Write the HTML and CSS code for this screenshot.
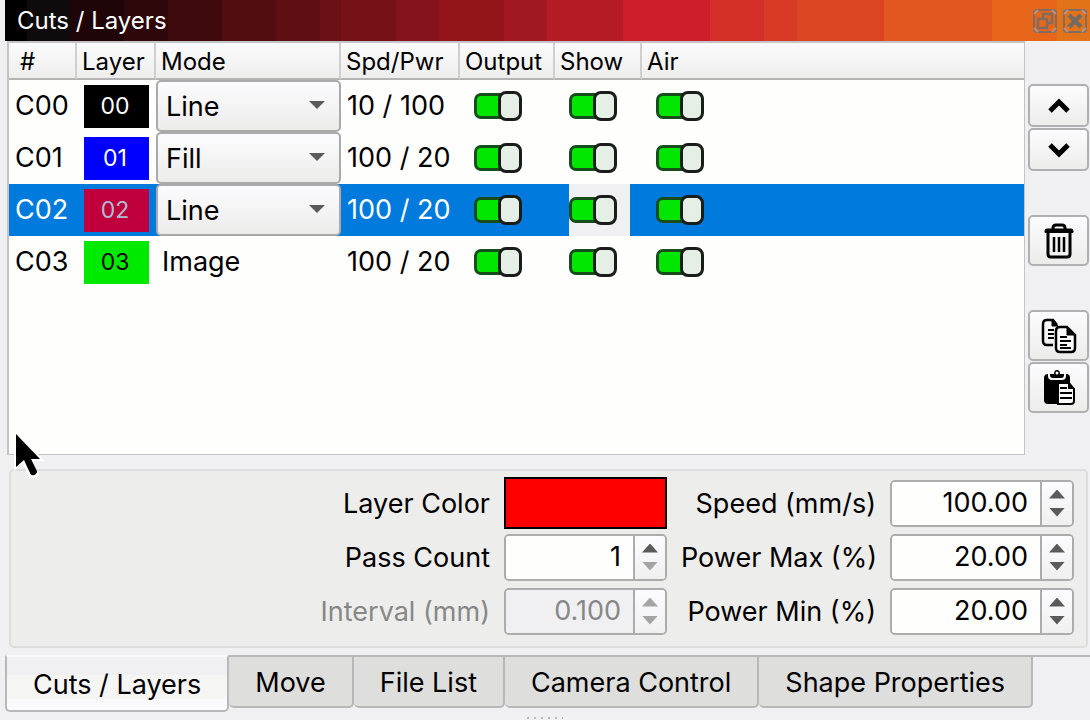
FILE: index.html
```html
<!DOCTYPE html>
<html lang="en">
<head>
<meta charset="utf-8">
<title>Cuts / Layers</title>
<link rel="stylesheet" href="styles.css">
</head>
<body>
<div class="dock">
  <header class="titlebar">
    <h1 class="title">Cuts / Layers</h1>
    <button class="dock-button" type="button" aria-label="Float">
      <svg width="24" height="24" viewBox="0 0 24 24" fill="none"><rect x="1" y="1" width="22" height="22" rx="3" stroke="#806c61" stroke-width="2"/><path d="M1 5L5 1M19 1l4 4M1 19l4 4M19 23l4-4" stroke="#b89286" stroke-width="2"/><path d="M5 10h9v9H5zM10 9V5h9v9h-4" stroke="#806c61" stroke-width="2.5"/></svg>
    </button>
    <button class="dock-button" type="button" aria-label="Close">
      <svg width="24" height="24" viewBox="0 0 24 24" fill="none"><rect x="1" y="1" width="22" height="22" rx="3" stroke="#806c61" stroke-width="2"/><path d="M1 5L5 1M19 1l4 4M1 19l4 4M19 23l4-4" stroke="#b89286" stroke-width="2"/><path d="M6 6l12 12M18 6L6 18" stroke="#746b62" stroke-width="4.5"/></svg>
    </button>
  </header>

  <main class="workspace">
    <div class="list">
      <table class="layers">
        <colgroup><col class="col-id"><col class="col-layer"><col class="col-mode"><col class="col-power"><col class="col-output"><col class="col-show"><col></colgroup>
        <thead>
          <tr><th class="th-id">#</th><th>Layer</th><th>Mode</th><th>Spd/Pwr</th><th>Output</th><th>Show</th><th>Air</th></tr>
        </thead>
        <tbody>
          <tr>
            <td>C00</td><td class="cell-flush"><span class="swatch black">00</span></td>
            <td class="cell-flush"><div class="combo"><select aria-label="Mode of C00"><option>Line</option><option>Fill</option></select></div></td>
            <td>10 / 100</td>
            <td class="cell-toggle"><input class="toggle" type="checkbox" aria-label="Output C00" checked></td>
            <td class="cell-toggle"><input class="toggle" type="checkbox" aria-label="Show C00" checked></td>
            <td class="cell-toggle"><input class="toggle" type="checkbox" aria-label="Air C00" checked></td>
          </tr>
          <tr>
            <td>C01</td><td class="cell-flush"><span class="swatch blue">01</span></td>
            <td class="cell-flush"><div class="combo"><select aria-label="Mode of C01"><option>Fill</option><option>Line</option></select></div></td>
            <td>100 / 20</td>
            <td class="cell-toggle"><input class="toggle" type="checkbox" aria-label="Output C01" checked></td>
            <td class="cell-toggle"><input class="toggle" type="checkbox" aria-label="Show C01" checked></td>
            <td class="cell-toggle"><input class="toggle" type="checkbox" aria-label="Air C01" checked></td>
          </tr>
          <tr class="selected">
            <td>C02</td><td class="cell-flush"><span class="swatch red">02</span></td>
            <td class="cell-flush"><div class="combo"><select aria-label="Mode of C02"><option>Line</option><option>Fill</option></select></div></td>
            <td>100 / 20</td>
            <td class="cell-toggle"><input class="toggle" type="checkbox" aria-label="Output C02" checked></td>
            <td class="cell-toggle"><span class="focus-cell"><input class="toggle" type="checkbox" aria-label="Show C02" checked></span></td>
            <td class="cell-toggle"><input class="toggle" type="checkbox" aria-label="Air C02" checked></td>
          </tr>
          <tr>
            <td>C03</td><td class="cell-flush"><span class="swatch green">03</span></td>
            <td>Image</td>
            <td>100 / 20</td>
            <td class="cell-toggle"><input class="toggle" type="checkbox" aria-label="Output C03" checked></td>
            <td class="cell-toggle"><input class="toggle" type="checkbox" aria-label="Show C03" checked></td>
            <td class="cell-toggle"><input class="toggle" type="checkbox" aria-label="Air C03" checked></td>
          </tr>
        </tbody>
      </table>
      <svg class="pointer" width="40" height="50" viewBox="0 0 40 50"><path d="M5 0v40l9-8 6 15q6 1 10-3l-6-14h12z" fill="#fff"/><path d="M7 3v33l8-7 6 13q1 3 4 2t3-4l-6-12h9z" fill="#000"/></svg>
    </div>

    <div class="tools">
      <div class="tool-group">
        <button class="tool" type="button" aria-label="Move up"><svg width="22" height="16" viewBox="0 0 22 16" fill="none"><path d="M2 13l9-9 9 9" stroke="#000" stroke-width="5"/></svg></button>
        <button class="tool" type="button" aria-label="Move down"><svg width="22" height="16" viewBox="0 0 22 16" fill="none"><path d="M2 3l9 9 9-9" stroke="#000" stroke-width="5"/></svg></button>
      </div>
      <div class="tool-group">
        <button class="tool tall" type="button" aria-label="Delete"><svg width="30" height="36" viewBox="0 0 30 36" fill="none" stroke="#000"><path d="M9 7V5q0-3 3-3h6q3 0 3 3v2" stroke-width="3"/><path d="M1 9.500V8q0-2 2-2h24q2 0 2 2v1.500z" fill="#000" stroke-width="1"/><path d="M4 9v22q0 3 3 3h16q3 0 3-3V9" stroke-width="3"/><path d="M10 14v15M15 14v15M20 14v15" stroke-width="2.500"/></svg></button>
      </div>
      <div class="tool-group">
        <button class="tool tall" type="button" aria-label="Copy"><svg width="36" height="36" viewBox="0 0 36 36" fill="none" stroke="#000" stroke-width="2.500"><path d="M12 27H6q-4 0-4-4V6q0-4 4-4h6l4 5" /><path d="M11 2l6 6h-6z" fill="#000" stroke-width="1"/><path d="M7 12h6M7 16h6M7 20h6" stroke-width="2"/><path d="M19 9h7l8 8v13q0 4-4 4H19q-4 0-4-4V13q0-4 4-4z" fill="#fbfbfb"/><path d="M26 9l8 8h-8z" fill="#000" stroke-width="1"/><path d="M19 19h7M19 23h11M19 27h7M19 30h11" stroke-width="2"/></svg></button>
        <button class="tool tall" type="button" aria-label="Paste"><svg width="34" height="36" viewBox="0 0 34 36" fill="none"><path d="M2 8q0-4 4-4h18q4 0 4 4v26H6q-4 0-4-4z" fill="#000"/><path d="M6 3h18v3q0 4-4 4H10q-4 0-4-4z" fill="#f8f8f8"/><path d="M8 4h4q0-4 3-4t3 4h4v1q0 3-3 3h-8q-3 0-3-3z" fill="#000"/><circle cx="15" cy="3" r="1.500" fill="#fff"/><path d="M16 13h11l5 6v12q0 3-3 3H16z" fill="#fafafa" stroke="#000" stroke-width="2"/><path d="M26 12l7 7h-7z" fill="#000"/><path d="M18 18h7M18 23h12M18 28h12" stroke="#000" stroke-width="2"/></svg></button>
      </div>
    </div>
  </main>

  <form class="settings">
    <label for="color">Layer Color</label>
    <button class="color-button" id="color" type="button" aria-label="Layer Color"></button>
    <label for="speed">Speed (mm/s)</label>
    <div class="spin"><input id="speed" type="text" value="100.00"><div class="steps"><button class="step up" type="button" aria-label="Increase speed"></button><button class="step down" type="button" aria-label="Decrease speed"></button></div></div>

    <label for="passes">Pass Count</label>
    <div class="spin"><input id="passes" type="text" value="1"><div class="steps"><button class="step up" type="button" aria-label="Increase pass count"></button><button class="step down" type="button" aria-label="Decrease pass count" disabled></button></div></div>
    <label for="power-max">Power Max (%)</label>
    <div class="spin"><input id="power-max" type="text" value="20.00"><div class="steps"><button class="step up" type="button" aria-label="Increase maximum power"></button><button class="step down" type="button" aria-label="Decrease maximum power"></button></div></div>

    <label class="muted" for="interval">Interval (mm)</label>
    <div class="spin"><input id="interval" type="text" value="0.100" disabled><div class="steps"><button class="step up" type="button" aria-label="Increase interval" disabled></button><button class="step down" type="button" aria-label="Decrease interval" disabled></button></div></div>
    <label for="power-min">Power Min (%)</label>
    <div class="spin"><input id="power-min" type="text" value="20.00"><div class="steps"><button class="step up" type="button" aria-label="Increase minimum power"></button><button class="step down" type="button" aria-label="Decrease minimum power"></button></div></div>
  </form>

  <nav class="tabs" role="tablist">
    <button class="tab active" type="button" role="tab" aria-selected="true">Cuts / Layers</button>
    <button class="tab" type="button" role="tab">Move</button>
    <button class="tab" type="button" role="tab">File List</button>
    <button class="tab" type="button" role="tab">Camera Control</button>
    <button class="tab" type="button" role="tab">Shape Properties</button>
    <span class="tab-rest"></span>
  </nav>
  <div class="grip"></div>
</div>
</body>
</html>
```
FILE: styles.css
```css
*, *::before, *::after { box-sizing: border-box; }

body {
  margin: 0;
  background: #f0f0f3;
  color: #000;
  font: 27px/32px Inter, "Liberation Sans", sans-serif;
}

button, input, select { font: inherit; color: inherit; margin: 0; }
button { padding: 0; }

.dock { display: flex; flex-direction: column; min-height: 100vh; }

.titlebar {
  display: flex;
  align-items: center;
  gap: 6px;
  height: 41px;
  margin-left: 5px;
  padding: 0 3px 0 12px;
  background: linear-gradient(90deg,
    #000 2%, #0f0b0c 2% 6%, #200508 6% 11%, #2e070b 11% 15%, #3f0a0e 15% 20%,
    #520d12 20% 25%, #5f0f13 25% 29%, #6b1015 29% 31%, #751217 31% 36%,
    #85121c 36% 40%, #93151a 40% 46%, #a11822 46% 50%, #b41b24 50% 57%,
    #cd1e29 57% 65%, #d32f28 65% 70%, #d83a25 70% 73%, #dc4424 73% 81%,
    #e2571f 81% 91%, #e8661a 91% 97%, #e27319 97%);
}
.title { flex: 1; margin: 0; color: #fff; font-size: 24px; font-weight: 400; }
.dock-button { width: 24px; height: 24px; border: 0; background: none; }
.dock-button svg { display: block; }

.workspace { flex: 1; display: flex; gap: 3px; padding: 0 1px 0 7px; }
.list {
  position: relative;
  flex: 1;
  border: 2px solid #c4c4c6;
  border-width: 2px 1px 1px 2px;
  background: #fefefd;
}

.layers { width: 100%; table-layout: fixed; border-collapse: separate; border-spacing: 0; }
.col-id { width: 68px; }
.col-layer { width: 79px; }
.col-mode { width: 185px; }
.col-power { width: 119px; }
.col-output { width: 95px; }
.col-show { width: 87px; }

.layers th {
  height: 37px;
  padding: 2px 0 0 5px;
  border-right: 2px solid #cfcfcf;
  border-bottom: 2px solid #b4b4b4;
  background: linear-gradient(#fbfbfd, #eeeeed);
  font-size: 24px;
  font-weight: 400;
  text-align: left;
  white-space: nowrap;
}
.layers th:last-child { border-right: 0; }
.layers .th-id { padding-left: 11px; }
.layers td { height: 52px; padding: 0 0 0 6px; white-space: nowrap; }
.layers .cell-flush { padding: 0; }
.layers .cell-toggle { padding: 0 0 0 14px; }
.selected { background: #007adc; color: #fff; }

.swatch {
  display: block;
  width: 65px;
  height: 43px;
  margin-left: 7px;
  padding-right: 3px;
  font-size: 23px;
  line-height: 42px;
  text-align: center;
}
.black { background: #000; color: #fff; }
.blue { background: #00f; color: #fff; }
.red { background: #c0003c; color: #aebfd4; }
.green { background: #00ea00; color: #000; }

.combo { position: relative; height: 52px; }
.combo select {
  width: 100%;
  height: 100%;
  padding: 2px 30px 0 8px;
  border: 2px solid #aaa;
  border-radius: 5px;
  background: linear-gradient(#fcfcfe, #ececeb);
  color: #000;
  appearance: none;
}
.combo::after {
  content: "";
  position: absolute;
  top: 21px;
  right: 16px;
  border: 8px solid transparent;
  border-top-color: #5a5a5a;
  border-bottom: 0;
  pointer-events: none;
}

.toggle {
  display: flex;
  align-items: center;
  width: 48px;
  height: 30px;
  appearance: none;
}
.toggle::before {
  content: "";
  width: 28px;
  height: 26px;
  border: 3px solid #174d1b;
  border-right: 0;
  border-radius: 7px 0 0 7px;
  background: #00e600;
}
.toggle::after {
  content: "";
  width: 24px;
  height: 30px;
  margin-left: -4px;
  border: 3px solid #1a1c1a;
  border-radius: 8px;
  background: #e5efe5;
}
.focus-cell { display: flex; align-items: center; width: 61px; height: 52px; background: #f0f0f3; }

.pointer { position: absolute; left: 0; bottom: -27px; z-index: 1; }

.tools { display: flex; flex-direction: column; gap: 44px; width: 61px; padding-top: 43px; }
.tool-group { display: flex; flex-direction: column; gap: 1px; }
.tool {
  display: flex;
  align-items: center;
  justify-content: center;
  height: 43px;
  border: 2px solid #b0b0b0;
  border-radius: 5px;
  background: linear-gradient(#fcfcfe, #ececeb);
}
.tool.tall { height: 51px; }

.settings {
  display: grid;
  grid-template-columns: 1fr 163px 195px 184px;
  grid-auto-rows: 54px;
  column-gap: 14px;
  align-items: center;
  margin: 14px 2px 7px 9px;
  padding: 5px 12px 8px 0;
  border: 2px solid #dddddd;
  border-radius: 5px;
  background: #ededeb;
}
.settings label { padding-top: 1px; text-align: right; white-space: nowrap; }
.muted { color: #878787; }
.color-button { height: 52px; border: 2px solid #000; background: #f00; }

.spin {
  display: flex;
  height: 47px;
  overflow: hidden;
  border: 2px solid #acacac;
  border-radius: 5px;
  background: #fefefd;
}
.spin input {
  flex: 1;
  min-width: 0;
  padding: 0 12px;
  border: 0;
  background: #fefefd;
  text-align: right;
}
.spin input:disabled { background: #f0f0f2; color: #878787; }
.steps {
  display: flex;
  flex-direction: column;
  justify-content: center;
  align-items: center;
  gap: 9px;
  width: 32px;
  border-left: 2px solid #acacac;
  background: linear-gradient(#fcfcfe, #f0f0f1);
}
.step {
  width: 16px;
  height: 9px;
  border: 0;
  background: #5a5a5a;
}
.step:disabled { background: #a4a4a4; }
.step.up { clip-path: polygon(50% 0, 100% 100%, 0 100%); }
.step.down { clip-path: polygon(0 0, 100% 0, 50% 100%); }

.tabs { display: flex; align-items: flex-start; padding-left: 5px; }
.tab {
  height: 53px;
  padding: 2px 26px 0;
  border: 2px solid #b8b8b8;
  border-left-width: 0;
  border-radius: 0 0 5px 5px;
  background: #dededd;
  white-space: nowrap;
}
.tab.active {
  height: 57px;
  border-left-width: 2px;
  border-top-color: transparent;
  background: linear-gradient(#f0f0f3 34%, #f5f5f4 34% 80%, #fafafc 80%);
}
.tab-rest { flex: 1; border-top: 2px solid #b8b8b8; }
.grip {
  width: 36px;
  height: 2px;
  margin: 5px auto 1px;
  background: repeating-linear-gradient(90deg, #bbb 0 2px, transparent 2px 7px);
}
```
